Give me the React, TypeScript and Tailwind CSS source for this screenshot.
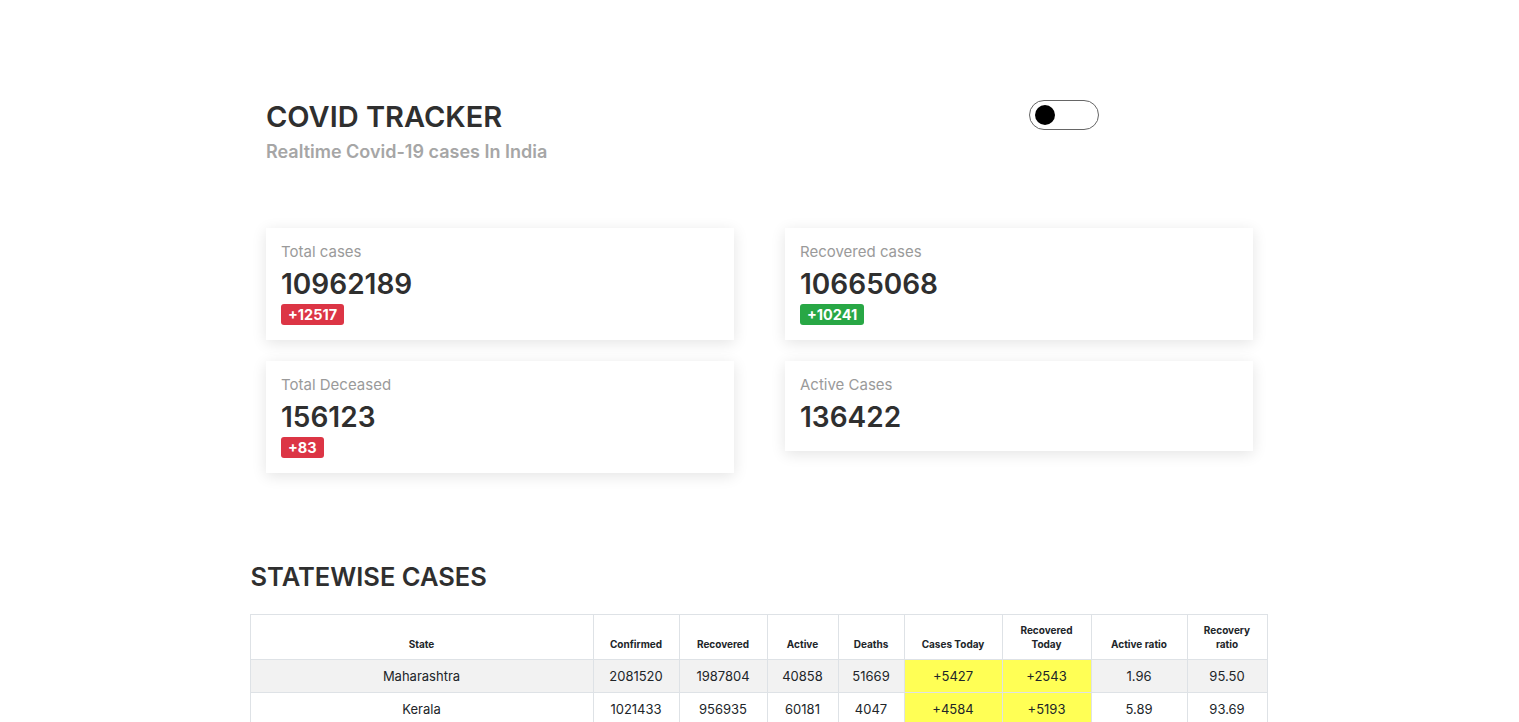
import React, { useState } from 'react';

type StatCard = {
  label: string;
  value: string;
  delta?: string;
  tone?: 'red' | 'green';
};

type StateRow = {
  state: string;
  confirmed: string;
  recovered: string;
  active: string;
  deaths: string;
  casesToday: string;
  recoveredToday: string;
  activeRatio: string;
  recoveryRatio: string;
};

const cards: StatCard[] = [
  { label: 'Total cases', value: '10962189', delta: '+12517', tone: 'red' },
  { label: 'Recovered cases', value: '10665068', delta: '+10241', tone: 'green' },
  { label: 'Total Deceased', value: '156123', delta: '+83', tone: 'red' },
  { label: 'Active Cases', value: '136422' },
];

const rows: StateRow[] = [
  {
    state: 'Maharashtra',
    confirmed: '2081520',
    recovered: '1987804',
    active: '40858',
    deaths: '51669',
    casesToday: '+5427',
    recoveredToday: '+2543',
    activeRatio: '1.96',
    recoveryRatio: '95.50',
  },
  {
    state: 'Kerala',
    confirmed: '1021433',
    recovered: '956935',
    active: '60181',
    deaths: '4047',
    casesToday: '+4584',
    recoveredToday: '+5193',
    activeRatio: '5.89',
    recoveryRatio: '93.69',
  },
  {
    state: 'Karnataka',
    confirmed: '947387',
    recovered: '928845',
    active: '6254',
    deaths: '12269',
    casesToday: '+413',
    recoveredToday: '+387',
    activeRatio: '0.66',
    recoveryRatio: '98.04',
  },
];

const headers = [
  { label: 'State', w: 'w-[343px]' },
  { label: 'Confirmed', w: 'w-[86px]' },
  { label: 'Recovered', w: 'w-[88px]' },
  { label: 'Active', w: 'w-[71px]' },
  { label: 'Deaths', w: 'w-[66px]' },
  { label: 'Cases Today', w: 'w-[98px]' },
  { label: 'Recovered Today', w: 'w-[89px]' },
  { label: 'Active ratio', w: 'w-[96px]' },
  { label: 'Recovery ratio', w: 'w-[80px]' },
];

const Card: React.FC<{ card: StatCard }> = ({ card }) => (
  <div
    className={`bg-white px-[15px] pt-[14px] shadow-[0_3px_14px_rgba(0,0,0,0.11)] ${card.delta ? 'pb-[14px]' : 'pb-[16px]'}`}
  >
    <p className="text-[15px] leading-[20px] text-[#9a9a9a]">{card.label}</p>
    <p className="mt-[5px] mb-[1px] text-[28px] leading-[34px] font-semibold text-[#2f2f2f]">{card.value}</p>
    {card.delta && (
      <span
        className={`inline-block rounded-[3px] px-[7px] text-[14.5px] leading-[21px] font-bold text-white ${
          card.tone === 'green' ? 'bg-[#28a745]' : 'bg-[#dc3545]'
        }`}
      >
        {card.delta}
      </span>
    )}
  </div>
);

const App: React.FC = () => {
  const [dark, setDark] = useState(false);

  return (
    <div className="min-h-screen bg-white pb-10 text-[#212529]" style={{ fontFamily: 'Inter, "Noto Sans", sans-serif' }}>
      <header className="mx-auto flex w-[987px] items-start pt-[98px]">
        <div>
          <h1 className="text-[29px] leading-[38px] font-semibold text-[#2f2f2f]">COVID TRACKER</h1>
          <p className="mt-[5px] text-[18px] leading-[22px] font-semibold text-[#a6a6a6]">Realtime Covid-19 cases In India</p>
        </div>
        <button
          onClick={() => setDark(!dark)}
          className="ml-auto mr-[154px] mt-[2px] flex h-[30px] w-[70px] items-center rounded-full border border-[#666] px-[5px]"
        >
          <span className={`block h-[20px] w-[20px] rounded-full bg-black ${dark ? 'ml-auto' : ''}`} />
        </button>
      </header>

      <section className="mx-auto mt-[65px] grid w-[987px] grid-cols-2 items-start gap-x-[51px] gap-y-[21px]">
        {cards.map((c) => (
          <Card key={c.label} card={c} />
        ))}
      </section>

      <section className="mx-auto mt-[88px] w-[1018px]">
        <h2 className="text-[25.5px] leading-[32px] font-semibold text-[#2f2f2f]">STATEWISE CASES</h2>
        <table className="mt-[21px] -ml-px w-[1017px] table-fixed border-collapse text-center">
          <thead>
            <tr>
              {headers.map((h) => (
                <th
                  key={h.label}
                  className={`${h.w} border border-[#dee2e6] px-2 pt-[8px] pb-[8px] align-bottom text-[10px] leading-[14px] font-bold`}
                >
                  {h.label}
                </th>
              ))}
            </tr>
          </thead>
          <tbody className="text-[13px] leading-[16px]">
            {rows.map((r, i) => (
              <tr key={r.state} className={i % 2 === 0 ? 'bg-[#f2f2f2]' : 'bg-white'}>
                <td className="border border-[#dee2e6] py-[8px]">{r.state}</td>
                <td className="border border-[#dee2e6] py-[8px]">{r.confirmed}</td>
                <td className="border border-[#dee2e6] py-[8px]">{r.recovered}</td>
                <td className="border border-[#dee2e6] py-[8px]">{r.active}</td>
                <td className="border border-[#dee2e6] py-[8px]">{r.deaths}</td>
                <td className="border border-[#dee2e6] bg-[#ffff55] py-[8px]">{r.casesToday}</td>
                <td className="border border-[#dee2e6] bg-[#ffff55] py-[8px]">{r.recoveredToday}</td>
                <td className="border border-[#dee2e6] py-[8px]">{r.activeRatio}</td>
                <td className="border border-[#dee2e6] py-[8px]">{r.recoveryRatio}</td>
              </tr>
            ))}
          </tbody>
        </table>
      </section>
    </div>
  );
};

export default App;
